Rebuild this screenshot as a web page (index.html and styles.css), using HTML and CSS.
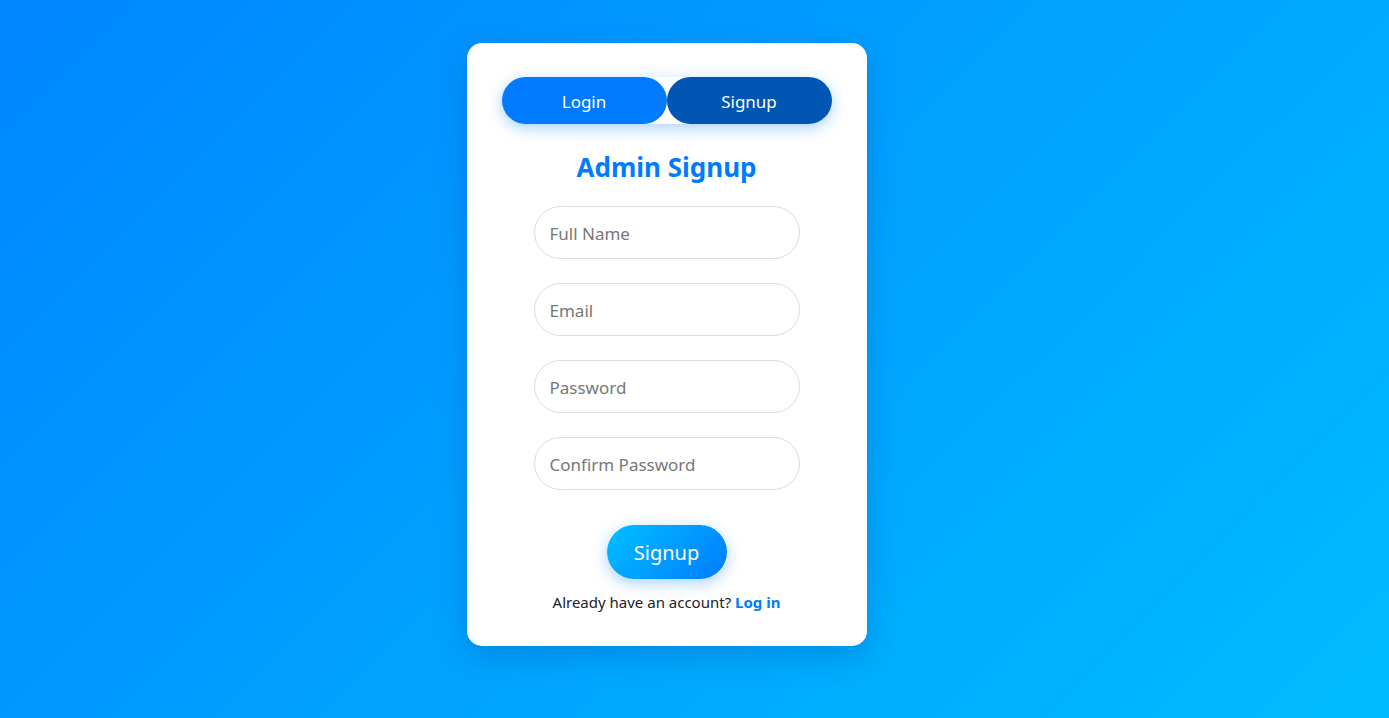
FILE: index.html
```html
<!DOCTYPE html>
<html lang="en">
<head>
<meta charset="utf-8">
<title>Admin Signup</title>
<link rel="stylesheet" href="styles.css">
</head>
<body>
<main class="page">
  <section class="card">
    <div class="toggle">
      <button class="toggle-btn login">Login</button>
      <button class="toggle-btn active">Signup</button>
    </div>
    <h1 class="title">Admin Signup</h1>
    <form class="form">
      <input class="field" type="text" placeholder="Full Name">
      <input class="field" type="email" placeholder="Email">
      <input class="field" type="password" placeholder="Password">
      <input class="field" type="password" placeholder="Confirm Password">
      <button class="submit" type="button">Signup</button>
    </form>
    <p class="switch">Already have an account? <a href="#" class="switch-link">Log in</a></p>
  </section>
</main>
</body>
</html>
```
FILE: styles.css
```css
* { box-sizing: border-box; }
html, body { margin: 0; height: 100%; }
body {
  font-family: "Noto Sans", "Open Sans", sans-serif;
  background: linear-gradient(135deg, #0086ff 0%, #00bcff 100%);
  overflow: hidden;
}
.page {
  height: 100%;
  display: flex;
  justify-content: center;
  align-items: flex-start;
  padding: 43px 56px 0 0;
}
.card {
  width: 400px;
  height: 603px;
  background: #fff;
  border-radius: 15px;
  box-shadow: 0 10px 30px rgba(0, 60, 140, 0.25);
  padding: 34px 35px 0;
  display: flex;
  flex-direction: column;
  align-items: center;
}
.toggle {
  display: flex;
  width: 330px;
  border-radius: 25px;
  box-shadow: 0 4px 15px rgba(0, 123, 255, 0.35);
}
.toggle-btn {
  flex: 1;
  height: 47px;
  border: none;
  border-radius: 25px;
  color: #fff;
  font-family: inherit;
  font-size: 17px;
  background: #007bff;
  padding: 1px 0 0;
}
.toggle-btn.active { background: #0056b3; }
.title {
  margin: 24px 0 20px;
  color: #007bff;
  font-size: 26px;
  font-weight: 700;
  line-height: 38px;
}
.form {
  width: 266px;
  display: flex;
  flex-direction: column;
  align-items: center;
  gap: 24px;
}
.field {
  width: 100%;
  height: 53px;
  border: 1px solid #ddd;
  border-radius: 27px;
  padding: 2px 15px 0;
  font-family: inherit;
  font-size: 17px;
  color: #333;
  outline: none;
}
.field::placeholder { color: #777; }
.submit {
  margin-top: 11px;
  width: 120px;
  height: 54px;
  border: none;
  border-radius: 27px;
  background: linear-gradient(135deg, #00c0ff, #007bff);
  color: #fff;
  font-family: inherit;
  font-size: 20px;
  box-shadow: 0 4px 15px rgba(0, 123, 255, 0.35);
  padding: 0;
}
.switch {
  margin: 12px 0 0;
  font-size: 15px;
  color: #222;
  line-height: 22px;
}
.switch-link {
  color: #007bff;
  font-weight: 700;
  text-decoration: none;
}
```
